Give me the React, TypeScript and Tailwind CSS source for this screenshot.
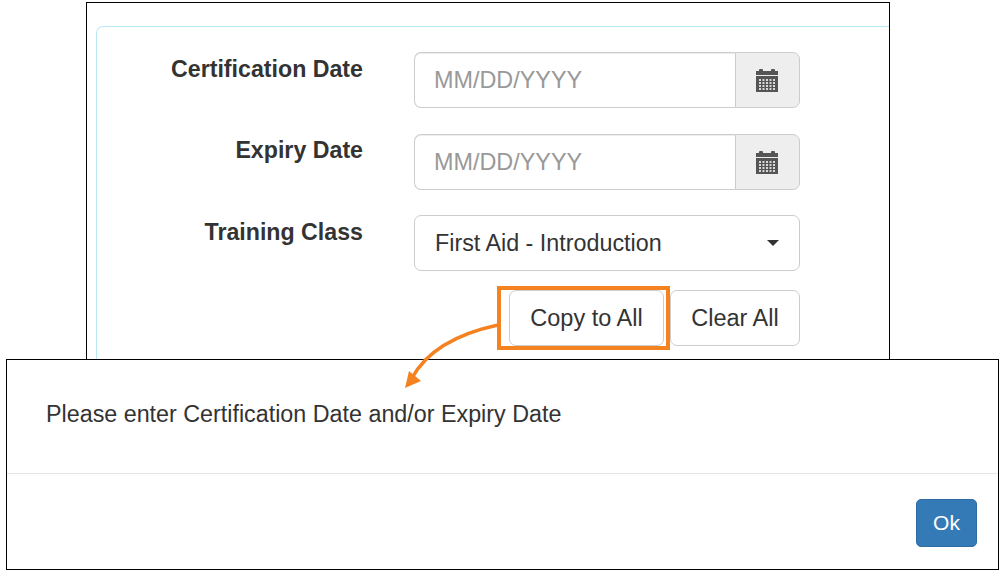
const CalendarIcon = () => (
  <svg width="22" height="23" viewBox="0 0 22 23" fill="#555">
    <rect x="3" y="0" width="4" height="4" rx="1" />
    <rect x="15" y="0" width="4" height="4" rx="1" />
    <rect x="0" y="2" width="22" height="4" />
    <rect x="0" y="7" width="22" height="16" />
    <g fill="#eee" opacity="0.85">
      {[3, 6.5, 10, 13.5, 17].map((x) =>
        [10, 13, 16, 19].map((y) => <rect key={`${x}-${y}`} x={x} y={y} width="2" height="2" />)
      )}
    </g>
  </svg>
);

const DateRow = ({ label, className, labelClass }: { label: string; className: string; labelClass: string }) => (
  <div className={`flex ${className}`}>
    <label className={`w-[266px] text-right text-[23.2px] leading-[30px] font-bold text-[#333] ${labelClass}`}>{label}</label>
    <div className="ml-[51px] flex h-[56px] w-[386px]">
      <div className="flex flex-1 items-center rounded-l-[7px] border border-r-0 border-[#ccc] pt-[2px] pl-[19px] text-[23.4px] text-[#999] shadow-[inset_0_1px_1px_rgba(0,0,0,0.075)]">
        MM/DD/YYYY
      </div>
      <div className="flex w-[65px] items-center justify-center rounded-r-[7px] border border-[#ccc] bg-[#eee] pr-[2px]">
        <CalendarIcon />
      </div>
    </div>
  </div>
);

export default function App() {
  return (
    <div className="relative h-[576px] w-[1007px] overflow-hidden bg-white pt-[2px] font-['Liberation_Sans',Arial,sans-serif]">
      <div className="ml-[86px] h-[358px] w-[804px] overflow-hidden border border-black pt-[23px] pl-[9px]">
        <div className="h-[360px] rounded-tl-[7px] border-t border-l border-[#b8e9f2] pt-[25px]">
          <DateRow label="Certification Date" className="" labelClass="pt-[2px]" />
          <DateRow label="Expiry Date" className="mt-[26px]" labelClass="pt-[1px]" />
          <div className="mt-[25px] flex">
            <label className="w-[266px] pt-[2px] text-right text-[23.2px] leading-[30px] font-bold text-[#333]">Training Class</label>
            <div className="ml-[51px] flex h-[56px] w-[386px] items-center justify-between rounded-[7px] border border-[#ccc] pr-[20px] pl-[20px] text-[23.3px] text-[#333]">
              First Aid - Introduction
              <span className="h-0 w-0 border-x-[6px] border-t-[6px] border-x-transparent border-t-[#333]" />
            </div>
          </div>
          <div className="mt-[19px] ml-[412px] flex w-[291px] justify-between">
            <button className="h-[56px] w-[155px] rounded-[7px] border border-[#ccc] pt-[2px] text-[23.5px] text-[#333]">Copy to All</button>
            <button className="h-[56px] w-[130px] rounded-[7px] border border-[#ccc] pt-[2px] text-[23.5px] text-[#333]">Clear All</button>
          </div>
        </div>
      </div>

      <div className="relative mt-[-1px] ml-[6px] h-[211px] w-[993px] border border-black bg-white">
        <div className="h-[113px] pt-[38px] pl-[39px] text-[23.3px] leading-[32px] text-[#333]">
          Please enter Certification Date and/or Expiry Date
        </div>
        <div className="flex justify-end border-t border-[#e5e5e5] pt-[25px] pr-[21px]">
          <button className="h-[48px] w-[61px] rounded-[5px] border border-[#2e6da4] bg-[#337ab7] text-[21px] text-white">Ok</button>
        </div>
      </div>

      {/* callout over the form and dialog */}
      <div className="absolute top-[286px] left-[497px] h-[64px] w-[173px] border-[4px] border-[#f58220]" />
      <svg className="absolute top-0 left-0" width="1007" height="576" fill="none">
        <path d="M498 325C470 331 430 345 412 378" stroke="#f58220" strokeWidth="3.5" />
        <path d="M405 388L409 371L421 381Z" fill="#f58220" />
      </svg>
    </div>
  );
}
